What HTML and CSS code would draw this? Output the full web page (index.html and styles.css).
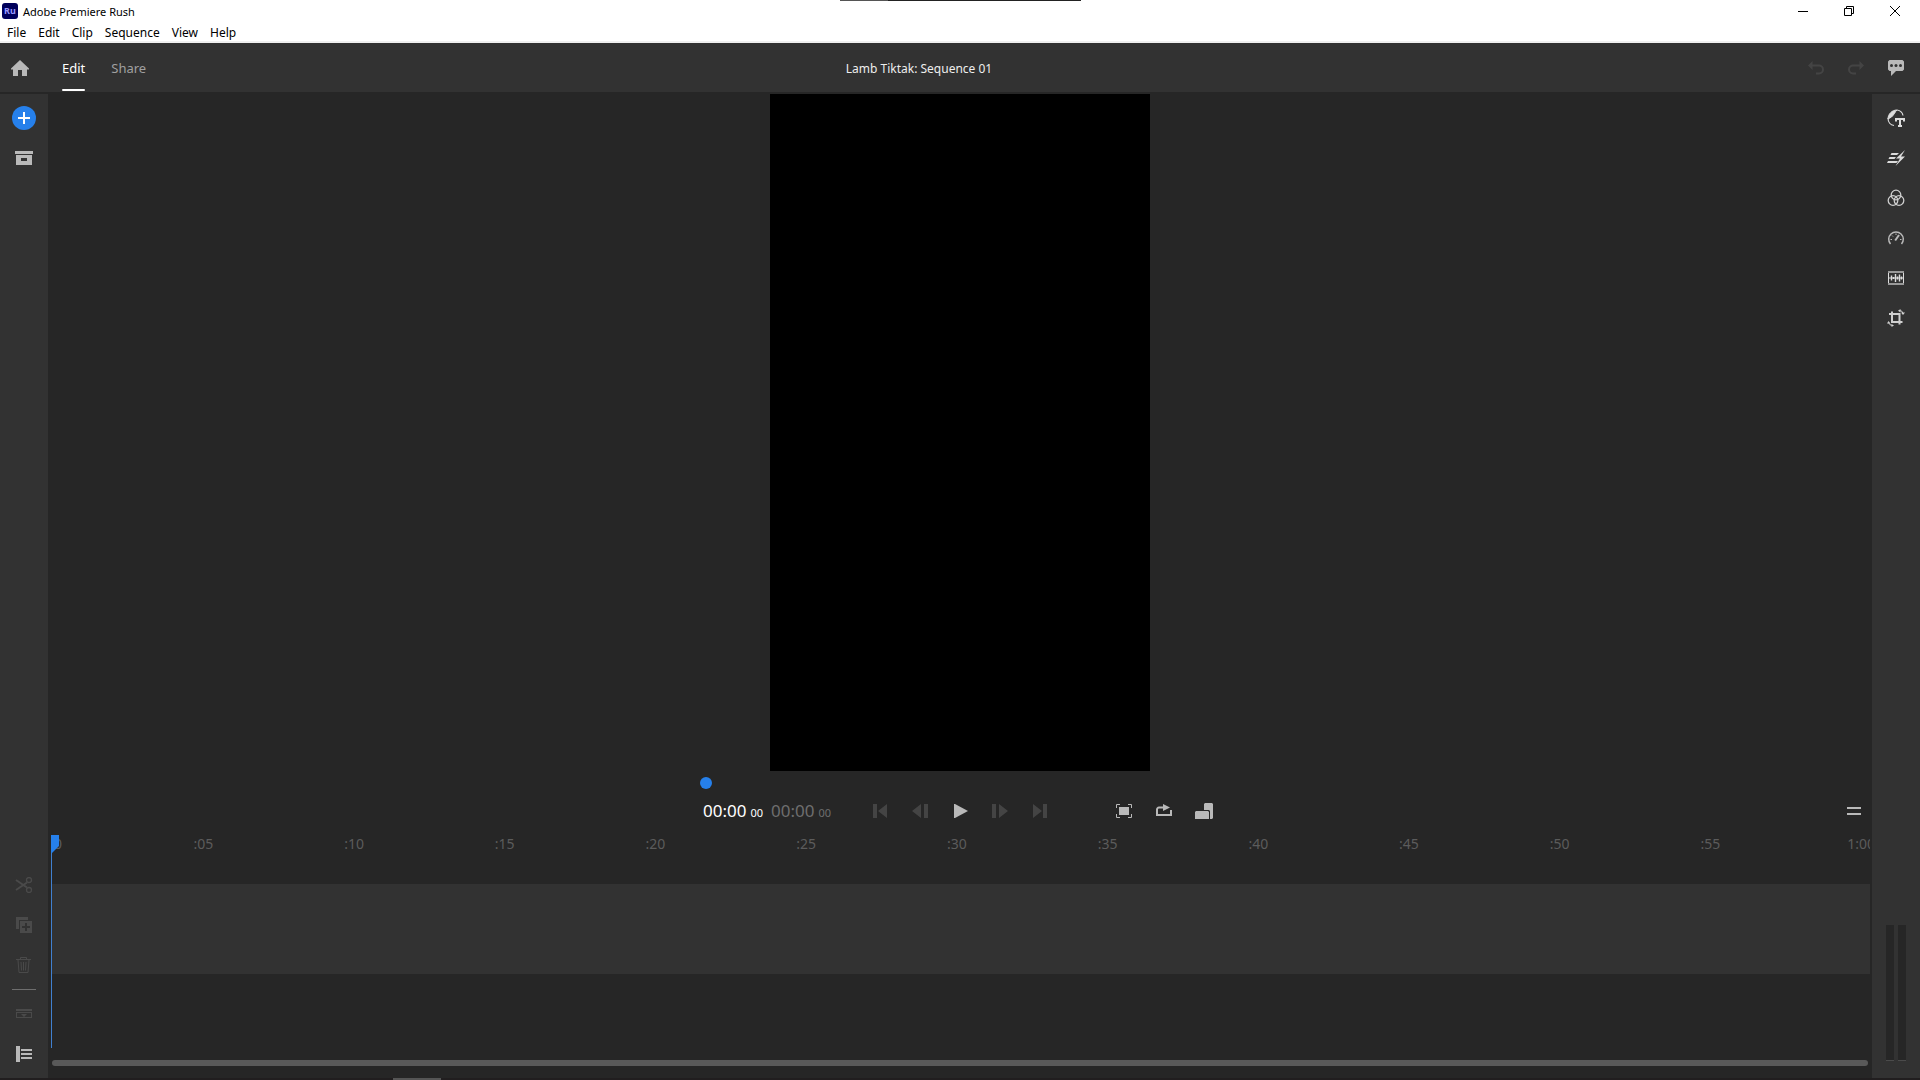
FILE: index.html
```html
<!DOCTYPE html>
<html lang="en">

<head>
   <meta charset="UTF-8">
   <meta name="viewport" content="width=device-width, initial-scale=1.0">
   <link rel="stylesheet" href="styles.css">
   <title>Adobe Premiere Rush</title>
</head>

<body>
   <div class="edge edge-top"></div>

   <!-- Window title and menus -->
   <div class="titlebar">
      <span class="app-logo">Ru</span>
      <span class="app-name">Adobe Premiere Rush</span>
      <div class="window-buttons">
         <button aria-label="Minimize"><svg width="10" height="10"><path d="M0 5.500h10" stroke="#000"/></svg></button>
         <button aria-label="Restore"><svg width="10" height="10" fill="none" stroke="#000"><path d="M.5 2.500h7v7h-7zM2.500 2.500v-2h7v7h-2"/></svg></button>
         <button aria-label="Close"><svg width="10" height="10"><path d="M0 0l10 10M10 0L0 10" stroke="#000"/></svg></button>
      </div>
   </div>
   <nav class="menubar">
      <button>File</button>
      <button>Edit</button>
      <button>Clip</button>
      <button>Sequence</button>
      <button>View</button>
      <button>Help</button>
   </nav>

   <header class="header">
      <div class="header-left">
         <button class="icon-btn" aria-label="Home">
            <svg width="18" height="16" fill="#b9b9b9"><path d="M9 0l9 8.500v1h-2V16h-5v-6H7v6H2V9.500H0v-1z"/></svg>
         </button>
         <button class="tab active">Edit</button>
         <button class="tab">Share</button>
      </div>
      <h1 class="project-title">Lamb Tiktak: Sequence 01</h1>
      <div class="header-right">
         <button class="icon-btn" aria-label="Undo" disabled>
            <svg width="16" height="14"><path d="M0 4.500L4.500 0v9z" fill="#444"/><path d="M4 4.500h7a4 4 0 0 1 0 8H8" fill="none" stroke="#444" stroke-width="2"/></svg>
         </button>
         <button class="icon-btn" aria-label="Redo" disabled>
            <svg width="16" height="14"><path d="M16 4.500L11.500 0v9z" fill="#444"/><path d="M12 4.500H5a4 4 0 0 0 0 8h3" fill="none" stroke="#444" stroke-width="2"/></svg>
         </button>
         <button class="icon-btn" aria-label="Feedback">
            <svg width="16" height="16"><path d="M1.500 0h13L16 1.500v8L14.500 11H8l-5 5v-5H1.500L0 9.500v-8z" fill="#b9b9b9"/><g fill="#323232"><circle cx="3.500" cy="5.500" r="1.500"/><circle cx="8" cy="5.500" r="1.500"/><circle cx="12.500" cy="5.500" r="1.500"/></g></svg>
         </button>
      </div>
   </header>

   <main class="workspace">
      <aside class="sidebar">
         <button class="icon-btn" aria-label="Add media">
            <svg width="24" height="24"><circle cx="12" cy="12" r="12" fill="#2680eb"/><path d="M6 12h12M12 6v12" stroke="#fff" stroke-width="2"/></svg>
         </button>
         <button class="icon-btn" aria-label="Project panel">
            <svg width="18" height="14" fill="#b9b9b9"><path d="M0 0h18v3H0z"/><path d="M1 4h16v10H1zm5 3v3h6V7z" fill-rule="evenodd"/></svg>
         </button>
         <div class="spacer"></div>
         <button class="icon-btn" aria-label="Split" disabled>
            <svg width="18" height="16" fill="none" stroke="#4a4a4a"><path d="M1 3l11 7.500M1 13L12 5.500" stroke-width="2"/><circle cx="14" cy="3" r="2.500" stroke-width="1.300"/><circle cx="14" cy="13" r="2.500" stroke-width="1.300"/></svg>
         </button>
         <button class="icon-btn" aria-label="Duplicate" disabled>
            <svg width="16" height="16" fill="#4a4a4a"><path d="M0 0h12v3H3v9H0z"/><path d="M4 4h12v12H4zm5 2v3H6v2h3v3h2v-3h3V9h-3V6z" fill-rule="evenodd"/></svg>
         </button>
         <button class="icon-btn" aria-label="Delete" disabled>
            <svg width="16" height="16" fill="none" stroke="#4a4a4a"><path d="M0 2.500h15M4.500 2.500v-2h6v2M2 3l1 12.500h9L13 3M5 5l.5 8.500M7.500 5v8.500M10 5l-.5 8.500"/></svg>
         </button>
         <hr class="divider">
         <button class="icon-btn" aria-label="Expand audio" disabled>
            <svg width="16" height="10" fill="#4a4a4a"><path d="M0 0h16v2H0zM0 3h16v6H0zm1 1v4h14V4z" fill-rule="evenodd"/><path d="M5 5h6L8 8z"/></svg>
         </button>
         <button class="icon-btn" aria-label="Control tracks">
            <svg width="16" height="16" fill="#b9b9b9"><path d="M0 0h4v16H0zM5 3h11v2H5zM5 7h11v2H5zM5 11h11v2H5z"/></svg>
         </button>
      </aside>

      <section class="stage">
         <div class="monitor"><div class="video"></div></div>
         <div class="scrub"><input type="range" min="0" max="100" value="0" aria-label="Position"></div>

         <div class="transport">
            <div class="timecode"><span>00:00</span><small>00</small></div>
            <div class="timecode total"><span>00:00</span><small>00</small></div>
            <div class="play-controls">
               <button class="icon-btn" aria-label="Go to start" disabled>
                  <svg width="14" height="14" fill="#444"><path d="M0 0h4v14H0zM14 0v14L5 7z"/></svg>
               </button>
               <button class="icon-btn" aria-label="Step back" disabled>
                  <svg width="16" height="14" fill="#444"><path d="M9 0v14L0 7zM12 0h4v14h-4z"/></svg>
               </button>
               <button class="icon-btn" aria-label="Play">
                  <svg width="16" height="14" fill="#b9b9b9"><path d="M2 0h1l13 7-13 7H2z"/></svg>
               </button>
               <button class="icon-btn" aria-label="Step forward" disabled>
                  <svg width="16" height="14" fill="#444"><path d="M0 0h4v14H0zM7 0l9 7-9 7z"/></svg>
               </button>
               <button class="icon-btn" aria-label="Go to end" disabled>
                  <svg width="14" height="14" fill="#444"><path d="M0 0l9 7-9 7zM10 0h4v14h-4z"/></svg>
               </button>
            </div>
            <div class="view-controls">
               <button class="icon-btn" aria-label="Full screen">
                  <svg width="16" height="14"><path d="M3 3h10v8H3z" fill="#b9b9b9"/><path d="M.5 4V.5H4M12 .5h3.500V4M15.500 10v3.500H12M4 13.500H.5V10" fill="none" stroke="#b9b9b9"/></svg>
               </button>
               <button class="icon-btn" aria-label="Loop">
                  <svg width="16" height="14"><path d="M8 3.500H3A2 2 0 0 0 1 5.500V11h14V6" fill="none" stroke="#b9b9b9" stroke-width="2"/><path d="M7 0l7 3.500L7 7z" fill="#b9b9b9"/></svg>
               </button>
               <button class="icon-btn" aria-label="Orientation">
                  <svg width="18" height="16" fill="#b9b9b9"><path d="M10 0h7l1 1v14l-1 1h-2V8l-1-1H9V1z"/><path d="M1 8h12l1 1v7H0V9z"/></svg>
               </button>
            </div>
            <button class="icon-btn timeline-menu" aria-label="Timeline options">
               <svg width="14" height="8" fill="#b9b9b9"><path d="M0 0h14v2H0zM0 6h14v2H0z"/></svg>
            </button>
         </div>

         <div class="timeline">
            <div class="ruler">
               <span>0</span><span>:05</span><span>:10</span><span>:15</span><span>:20</span><span>:25</span><span>:30</span><span>:35</span><span>:40</span><span>:45</span><span>:50</span><span>:55</span><span>1:00</span>
            </div>
            <div class="track"></div>
            <div class="scroll-thumb"></div>
            <div class="playhead">
               <svg width="8" height="18"><path d="M0 0h8v11l-7 7H0z" fill="#2680eb"/></svg>
            </div>
         </div>
      </section>

      <aside class="sidebar">
         <button class="icon-btn" aria-label="Graphics">
            <svg width="18" height="18" fill="none" stroke="#dcdcdc"><path d="M1 10C1 5 5 1 10 1 8.500 2 7 6 4.500 8z" fill="#dcdcdc"/><path d="M10 1c3 .5 5.500 2.500 6 5.500M1 9c0 4 2.500 7 6 7.500" stroke-width="1.200"/><path d="M9 12.500V10h8v2.500M13 10v7M11 17h4" stroke-width="2"/></svg>
         </button>
         <button class="icon-btn" aria-label="Transitions">
            <svg width="18" height="16" fill="#dcdcdc"><path d="M18 0L9 8.500h4L8.500 16 18 6.500h-4zM4.500 3H12l-2 2H3.500zM2.500 7H9l-1.500 2H1.500zM1 11h10l-1.500 2H0z"/></svg>
         </button>
         <button class="icon-btn" aria-label="Color">
            <svg width="18" height="18" fill="none" stroke="#cfcfcf" stroke-width="1.300"><circle cx="9" cy="6" r="4.800"/><circle cx="6" cy="11.500" r="4.800"/><circle cx="12" cy="11.500" r="4.800"/></svg>
         </button>
         <button class="icon-btn" aria-label="Speed">
            <svg width="18" height="16" fill="none" stroke="#b9b9b9"><path d="M3.500 14A7.300 7.300 0 1 1 14.500 14" stroke-width="1.500"/><path d="M8.200 10.500L12 5" stroke-width="2"/><path d="M3.500 9.500H5M5 5.500l1 1M9 3.500V5M13 9.500h1.500"/></svg>
         </button>
         <button class="icon-btn" aria-label="Audio">
            <svg width="16" height="14" fill="none" stroke="#dcdcdc"><path d="M.5 1v12M15.500 1v12M1 7h14"/><path d="M0 1h16M0 13h16" stroke="#999" stroke-width="2"/><path d="M3.500 4.500v5M5.500 6v2M7.500 3v8M9.500 5.500v3M11.500 3.500v7M13.500 5.500v3" stroke-width="1.400"/></svg>
         </button>
         <button class="icon-btn" aria-label="Transform">
            <svg width="18" height="18" fill="none" stroke="#cfcfcf"><path d="M5 2.500v10.500h10.500M2 5h10.500v10.500" stroke-width="2"/><path d="M12.500 1.500q3 0 3.500 3M5.500 16.500q-3 0-4-3"/><path d="M13.500 0v3.500L11 1.700zM14 3.500h4L16 6zM4.500 15v3l2.500-1.500zM0 14.500h3.500L1.500 12z" fill="#cfcfcf" stroke="none"/></svg>
         </button>
         <div class="spacer"></div>
         <div class="meters">
            <div class="meter"></div>
            <div class="meter"></div>
         </div>
      </aside>
   </main>

   <div class="edge edge-bottom"></div>
</body>

</html>
```

FILE: styles.css
```css
* {
   padding: 0;
   margin: 0;
   box-sizing: border-box;
}

body {
   display: flex;
   flex-direction: column;
   height: 100vh;
   overflow: hidden;
   padding-bottom: 2px;
   font-family: "Noto Sans", "Open Sans", sans-serif;
   font-size: 12px;
   background-color: #262626;
   color: #fff;
}

button {
   border: none;
   background: none;
   font: inherit;
   color: inherit;
}

svg {
   display: block;
}

/* slivers of the windows behind */
.edge {
   position: absolute;
}

.edge-top {
   top: 0;
   left: 840px;
   width: 241px;
   height: 1px;
   background: linear-gradient(to right, #555 48px, #222 48px);
}

.edge-bottom {
   bottom: 0;
   left: 0;
   width: 100%;
   height: 2px;
   background: linear-gradient(to right, #211e1f 393px, #555 393px, #555 441px, #211e1f 441px);
}

.titlebar {
   display: flex;
   align-items: center;
   height: 22px;
   padding: 0 2px;
   gap: 5px;
   background-color: #fff;
   color: #000;
}

.app-logo {
   width: 16px;
   height: 16px;
   border-radius: 3px;
   background-color: #00005b;
   color: #9999ff;
   font-size: 9px;
   font-weight: bold;
   line-height: 15px;
   text-align: center;
}

.app-name {
   padding-top: 1px;
   font-size: 11px;
}

.window-buttons {
   display: flex;
   margin-left: auto;
}

.window-buttons button {
   display: flex;
   align-items: center;
   justify-content: center;
   width: 46px;
   height: 20px;
}

.menubar {
   display: flex;
   align-items: center;
   height: 21px;
   padding-top: 2px;
   padding-left: 7px;
   gap: 12px;
   border-bottom: 2px solid #f0f0f0;
   background-color: #fff;
   color: #000;
}

.header {
   display: flex;
   height: 49px;
   flex: none;
   align-items: center;
   background-color: #323232;
   font-size: 13px;
}

.header-left,
.header-right {
   display: flex;
   flex: 1;
   align-items: center;
   height: 100%;
}

.header-right {
   justify-content: flex-end;
   padding-right: 4px;
}

.tab {
   position: relative;
   height: 100%;
   margin-left: 22px;
   padding-top: 1px;
   color: #a0a0a0;
}

.tab + .tab {
   margin-left: 26px;
}

.tab.active {
   color: #fff;
}

.tab.active::after {
   content: "";
   position: absolute;
   left: 0;
   bottom: 1px;
   width: 100%;
   height: 2px;
   border-radius: 1px;
   background-color: #fff;
}

.project-title {
   margin-right: 78px;
   padding-top: 1px;
   font-size: 12px;
   font-weight: normal;
   color: #eee;
}

.icon-btn {
   display: flex;
   flex: none;
   align-items: center;
   justify-content: center;
   width: 40px;
   height: 40px;
}

.workspace {
   display: flex;
   flex: 1;
   min-height: 0;
   margin-top: 2px;
}

.sidebar {
   display: flex;
   flex: none;
   flex-direction: column;
   align-items: center;
   width: 48px;
   padding: 4px 0;
   background-color: #323232;
}

.spacer {
   flex: 1;
}

.divider {
   width: 24px;
   height: 1px;
   margin: 4px 0;
   border: none;
   background-color: #6e6e6e;
}

.meters {
   display: flex;
   gap: 4px;
   margin-bottom: 13px;
}

.meter {
   width: 8px;
   height: 136px;
   border-bottom: 1px solid #4b4b4b;
   background-color: #262626;
}

.stage {
   display: flex;
   flex: 1;
   flex-direction: column;
   min-width: 0;
}

.monitor {
   display: flex;
   flex: 1;
   justify-content: center;
   min-height: 0;
}

.video {
   height: 100%;
   aspect-ratio: 9 / 16;
   background-color: #000;
}

.scrub {
   display: flex;
   flex: none;
   align-items: center;
   justify-content: center;
   height: 24px;
}

.scrub input {
   width: 520px;
   height: 12px;
   appearance: none;
   background: none;
}

.scrub input::-webkit-slider-thumb {
   appearance: none;
   width: 12px;
   height: 12px;
   border-radius: 50%;
   background-color: #2680eb;
}

.transport {
   display: flex;
   flex: none;
   align-items: center;
   height: 32px;
   padding-left: calc(50% - 257px);
}

.timecode {
   display: flex;
   align-items: baseline;
   gap: 4px;
   width: 68px;
   padding-top: 1px;
   font-size: 17px;
   line-height: 24px;
}

.timecode small {
   font-size: 11px;
}

.total {
   color: #6e6e6e;
}

.play-controls,
.view-controls {
   display: flex;
}

.play-controls {
   margin-left: 21px;
}

.view-controls {
   margin-left: 44px;
}

.timeline-menu {
   margin-left: auto;
   margin-right: -2px;
}

.timeline {
   position: relative;
   flex: none;
   padding: 0 2px 12px 4px;
}

.ruler {
   display: flex;
   height: 57px;
   padding-top: 7px;
   overflow: hidden;
   font-size: 14px;
   line-height: 20px;
   color: #5c5c5c;
}

.ruler span {
   flex: 0 0 8.29%;
   text-align: center;
}

.ruler span:first-child {
   flex-basis: 76px;
   padding-left: 2px;
   text-align: left;
}

.track {
   height: 90px;
   margin-bottom: 86px;
   background-color: #323232;
}

.scroll-thumb {
   height: 6px;
   margin-right: 2px;
   border-radius: 3px;
   background-color: #595959;
}

.playhead {
   position: absolute;
   top: 8px;
   bottom: 30px;
   left: 3px;
   border-left: 1px solid #4080d0;
}

.playhead svg {
   margin-left: -1px;
}
```
